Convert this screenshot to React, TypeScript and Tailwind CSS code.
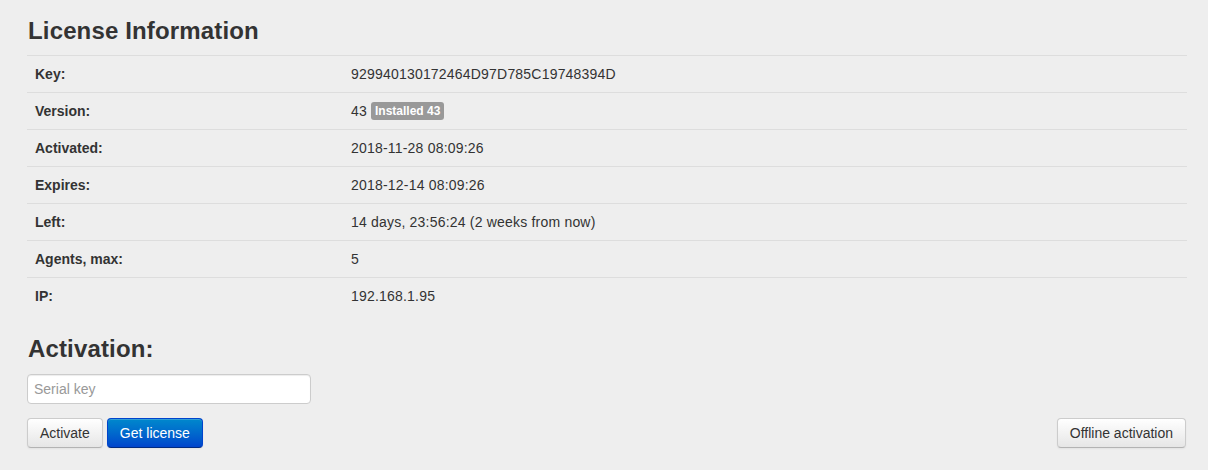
const rows: { label: string; value: string; badge?: string }[] = [
  { label: "Key:", value: "929940130172464D97D785C19748394D" },
  { label: "Version:", value: "43", badge: "Installed 43" },
  { label: "Activated:", value: "2018-11-28 08:09:26" },
  { label: "Expires:", value: "2018-12-14 08:09:26" },
  { label: "Left:", value: "14 days, 23:56:24 (2 weeks from now)" },
  { label: "Agents, max:", value: "5" },
  { label: "IP:", value: "192.168.1.95" },
];

function App() {
  return (
    <div className="min-h-[470px] bg-[#eeeeee] pl-[27px] pr-[21px] pt-[11px] text-[14px] leading-[20px] text-[#333333] [font-family:'Liberation_Sans',Arial,sans-serif]">
      <h2 className="m-0 text-[24px] font-bold leading-[40px] tracking-[0.15px] pl-px">License Information</h2>

      <table className="mt-[4px] w-full border-collapse">
        <tbody>
          {rows.map((row) => (
            <tr key={row.label} className="border-t border-[#dddddd]">
              <td className="w-[316px] p-2 font-bold">{row.label}</td>
              <td className="p-2 tracking-[0.2px]">
                {row.value}
                {row.badge && (
                  <span className="ml-[4px] inline-block rounded-[3px] bg-[#999999] px-1 py-[2px] align-[1px] text-[12px] font-bold leading-[14px] tracking-normal text-white">
                    {row.badge}
                  </span>
                )}
              </td>
            </tr>
          ))}
        </tbody>
      </table>

      <h2 className="mt-[15px] text-[24px] font-bold leading-[40px] tracking-[0.15px] pl-px">Activation:</h2>

      <div className="mt-[5px]">
        <input
          type="text"
          placeholder="Serial key"
          className="h-[30px] w-[284px] rounded-[4px] border border-[#cccccc] bg-white px-[6px] py-1 text-[14px] text-[#555555] placeholder:text-[#999999] shadow-[inset_0_1px_1px_rgba(0,0,0,0.075)] outline-none"
        />
      </div>

      <div className="mt-[14px] flex items-center">
        <button className="h-[30px] rounded-[4px] border border-[#cccccc] border-b-[#b3b3b3] bg-gradient-to-b from-white to-[#e6e6e6] px-3 text-[14px] text-[#333333] shadow-[inset_0_1px_0_rgba(255,255,255,0.2),0_1px_2px_rgba(0,0,0,0.05)]">
          Activate
        </button>
        <button className="ml-[4px] h-[30px] rounded-[4px] border border-[#0044cc] border-b-[#002a80] bg-gradient-to-b from-[#0088cc] to-[#0044cc] px-3 text-[14px] text-white shadow-[inset_0_1px_0_rgba(255,255,255,0.2),0_1px_2px_rgba(0,0,0,0.05)]">
          Get license
        </button>
        <button className="ml-auto mr-px h-[30px] rounded-[4px] border border-[#cccccc] border-b-[#b3b3b3] bg-gradient-to-b from-white to-[#e6e6e6] px-3 text-[14px] text-[#333333] shadow-[inset_0_1px_0_rgba(255,255,255,0.2),0_1px_2px_rgba(0,0,0,0.05)]">
          Offline activation
        </button>
      </div>
    </div>
  );
}

export default App;
